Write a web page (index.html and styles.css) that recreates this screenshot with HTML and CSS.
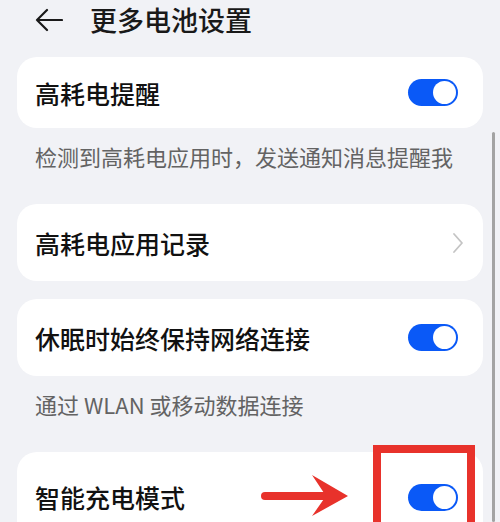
FILE: index.html
```html
<!DOCTYPE html>
<html lang="zh">
<head>
<meta charset="utf-8">
<link rel="stylesheet" href="styles.css">
</head>
<body>
<div class="page">
  <header class="header">
    <svg class="back" width="28" height="24" viewBox="0 0 28 24"><path d="M12 2 L2 12 L12 22 M2 12 H27" fill="none" stroke="#1a1a1a" stroke-width="2.2" stroke-linecap="round" stroke-linejoin="round"/></svg>
    <h1 class="title">更多电池设置</h1>
  </header>

  <div class="card short">
    <span class="label">高耗电提醒</span>
    <span class="toggle"><span class="knob"></span></span>
  </div>
  <p class="hint">检测到高耗电应用时，发送通知消息提醒我</p>

  <div class="card">
    <span class="label">高耗电应用记录</span>
    <svg class="chev" width="12" height="22" viewBox="0 0 12 22"><path d="M2 2 L10 11 L2 20" fill="none" stroke="#c4c4c4" stroke-width="1.8" stroke-linecap="round" stroke-linejoin="round"/></svg>
  </div>

  <div class="card gap">
    <span class="label">休眠时始终保持网络连接</span>
    <span class="toggle"><span class="knob"></span></span>
  </div>
  <p class="hint">通过 WLAN 或移动数据连接</p>

  <div class="card tall">
    <span class="label">智能充电模式</span>
    <span class="toggle"><span class="knob"></span></span>
  </div>
</div>

<div class="scrollbar"></div>
<div class="redbox"></div>
<svg class="redarrow" width="100" height="50" viewBox="0 0 100 50">
  <path d="M11 26 H76" stroke="#e8322b" stroke-width="8" stroke-linecap="round"/>
  <polygon points="58,5 94,26 58,46 72,26" fill="#e8322b"/>
</svg>
</body>
</html>
```
FILE: styles.css
```css
html, body {
  margin: 0;
  padding: 0;
}
body {
  width: 500px;
  height: 522px;
  overflow: hidden;
  background: #f1f2f6;
  font-family: "Noto Sans CJK SC", "Noto Sans", sans-serif;
  position: relative;
}
.page {
  padding: 0 17px;
}
.header {
  height: 40px;
  display: flex;
  align-items: center;
  padding-left: 18px;
  margin-bottom: 17px;
}
.back {
  margin-right: 27px;
  flex: none;
}
.title {
  margin: 0;
  font-size: 27px;
  font-weight: 500;
  color: #191919;
  line-height: 40px;
}
.card {
  background: #fff;
  border-radius: 20px;
  height: 77px;
  display: flex;
  align-items: center;
  justify-content: space-between;
  padding: 0 25px 0 18px;
}
.card.short {
  height: 71px;
}
.card.gap {
  margin-top: 18px;
}
.card.tall {
  height: 90px;
}
.label {
  font-size: 25px;
  font-weight: 500;
  color: #111;
  line-height: 30px;
}
.chev {
  margin-right: -6px;
}
.hint {
  margin: 0;
  padding: 17px 18px 37px;
  font-size: 22px;
  line-height: 22px;
  color: #636363;
}
.toggle {
  width: 50px;
  height: 27px;
  box-sizing: border-box;
  border-radius: 14px;
  background: #0a59f7;
  display: flex;
  justify-content: flex-end;
  align-items: center;
  padding: 2px;
}
.knob {
  width: 23px;
  height: 23px;
  border-radius: 50%;
  background: #fff;
}
.scrollbar {
  position: absolute;
  left: 492px;
  top: 132px;
  bottom: 0;
  width: 3px;
  border-radius: 2px;
  background: #a3a3a3;
}
.redbox {
  position: absolute;
  left: 373px;
  top: 445px;
  width: 102px;
  height: 100px;
  box-sizing: border-box;
  border: 8px solid #e8322b;
}
.redarrow {
  position: absolute;
  left: 254px;
  top: 470px;
}
```
